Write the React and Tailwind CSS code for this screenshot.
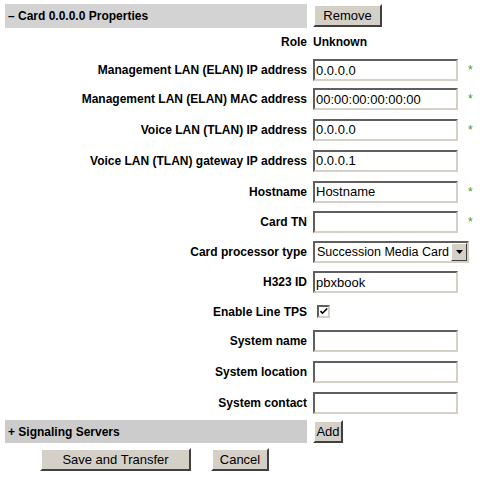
import React from 'react';

const FONT = { fontFamily: '"Liberation Sans", Arial, sans-serif' };

const ROWS = [
  { label: 'Management LAN (ELAN) IP address', value: '0.0.0.0', req: true, h: 'h-[28px]' },
  { label: 'Management LAN (ELAN) MAC address', value: '00:00:00:00:00:00', req: true, h: 'h-[30px]' },
  { label: 'Voice LAN (TLAN) IP address', value: '0.0.0.0', req: true, h: 'h-[31px]' },
  { label: 'Voice LAN (TLAN) gateway IP address', value: '0.0.0.1', req: false, h: 'h-[31px]' },
  { label: 'Hostname', value: 'Hostname', req: true, h: 'h-[31px]' },
  { label: 'Card TN', value: '', req: true, h: 'h-[30px]' },
];

const ROWS2 = [
  { label: 'System name', h: 'h-[30px]' },
  { label: 'System location', h: 'h-[31px]' },
  { label: 'System contact', h: 'h-[31px]' },
];

function Btn({ children, className }) {
  return (
    <button
      className={`h-[23px] bg-[#d4d0c8] text-[13px] text-black border-2 border-t-white border-l-white border-b-[#404040] border-r-[#404040] leading-none ${className}`}
    >
      {children}
    </button>
  );
}

function TextBox({ value }) {
  return (
    <div className="w-[145px] h-[22px] bg-white border-2 border-t-[#5f5f5f] border-l-[#5f5f5f] border-b-[#d4d0c8] border-r-[#d4d0c8] flex items-center px-[1px] text-[13px] text-black leading-none whitespace-nowrap overflow-hidden">
      {value}
    </div>
  );
}

function Row({ label, h, children, req }) {
  return (
    <div className={`flex items-center ${h}`}>
      <div className="w-[302px] text-right font-bold text-[12px]">{label}</div>
      <div className="ml-[6px] flex items-center">
        {children}
        {req && <span className="ml-[10px] text-[12px] text-[#3f9a2a] leading-none">*</span>}
      </div>
    </div>
  );
}

export default function App() {
  return (
    <div className="w-[480px] h-[480px] bg-white pl-[5px] pt-[4px] text-black" style={FONT}>
      <div className="flex items-start">
        <div className="w-[302px] h-[24px] bg-[#d3d3d3] flex items-center pl-[3px] font-bold text-[12px]">
          – Card 0.0.0.0 Properties
        </div>
        <Btn className="ml-[6px] w-[69px]">Remove</Btn>
      </div>

      <div className="flex items-center h-[28px]">
        <div className="w-[302px] text-right font-bold text-[12px]">Role</div>
        <div className="ml-[6px] font-bold text-[12px]">Unknown</div>
      </div>

      {ROWS.map((r) => (
        <Row key={r.label} label={r.label} h={r.h} req={r.req}>
          <TextBox value={r.value} />
        </Row>
      ))}

      <Row label="Card processor type" h="h-[30px]">
        <div className="w-[156px] h-[22px] bg-white border-2 border-t-[#5f5f5f] border-l-[#5f5f5f] border-b-[#d4d0c8] border-r-[#d4d0c8] flex items-center text-[12.5px] leading-none">
          <span className="flex-1 pl-[2px] whitespace-nowrap overflow-hidden">Succession Media Card</span>
          <span className="w-[16px] h-[18px] bg-[#d4d0c8] border border-t-white border-l-white border-b-[#404040] border-r-[#404040] flex items-center justify-center">
            <svg width="7" height="4" viewBox="0 0 7 4"><path d="M0 0h7L3.5 4z" fill="#000" /></svg>
          </span>
        </div>
      </Row>

      <Row label="H323 ID" h="h-[30px]">
        <TextBox value="pbxbook" />
      </Row>

      <Row label="Enable Line TPS" h="h-[29px]">
        <div className="ml-[4px] w-[13px] h-[13px] bg-white border-2 border-t-[#5f5f5f] border-l-[#5f5f5f] border-b-[#d4d0c8] border-r-[#d4d0c8] flex items-center justify-center">
          <svg width="8" height="7" viewBox="0 0 8 7"><path d="M0.5 3l2 2.2L7.2 0.5" stroke="#000" strokeWidth="1.6" fill="none" /></svg>
        </div>
      </Row>

      {ROWS2.map((r) => (
        <Row key={r.label} label={r.label} h={r.h}>
          <TextBox value="" />
        </Row>
      ))}

      <div className="flex items-start mt-[2px]">
        <div className="w-[302px] h-[23px] bg-[#cccccc] flex items-center pl-[3px] font-bold text-[12px]">
          + Signaling Servers
        </div>
        <Btn className="ml-[6px] w-[30px]">Add</Btn>
      </div>

      <div className="flex mt-[5px] pl-[35px]">
        <Btn className="w-[151px]">Save and Transfer</Btn>
        <Btn className="ml-[20px] w-[58px]">Cancel</Btn>
      </div>
    </div>
  );
}
